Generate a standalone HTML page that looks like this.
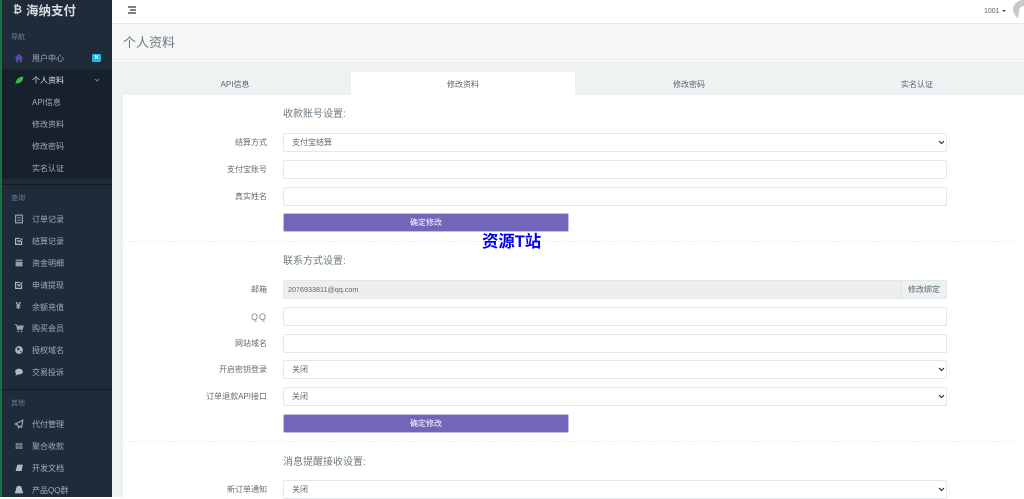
<!DOCTYPE html>
<html lang="zh"><head><meta charset="utf-8"><title>个人资料</title>
<style>
*{box-sizing:border-box}
html,body{margin:0;padding:0;width:1024px;height:497px;overflow:hidden;background:#fff;font-family:"Liberation Sans","Noto Sans CJK SC",sans-serif;color:#58666e}
.a{position:absolute}
#side{left:0;top:0;width:112px;height:497px;background:#1f2b38;border-left:2px solid #14743a;overflow:hidden}
.sec{position:absolute;left:9px;font-size:7px;color:#6d8093;line-height:10px}
.it{position:absolute;left:30px;font-size:8px;color:#a0aebb;line-height:12px;white-space:nowrap}
.ic{position:absolute;left:10px;width:14px;height:14px;transform:scale(.85)}
.ln{position:absolute;left:0;width:110px;height:1px;background:#121a22}
.lab{position:absolute;width:100px;left:167px;text-align:right;font-size:8px;color:#5f6c74;line-height:12px;white-space:nowrap}
.f{position:absolute;left:283px;width:664px;height:19px;background:#fff;border:1px solid #e3e8ea;border-radius:2px;font-size:8px;line-height:18px;padding-left:8px;color:#58666e}
.f svg{position:absolute;right:1px;top:6px}
.h{position:absolute;left:283px;font-size:10px;line-height:14px;color:#6d7a82;white-space:nowrap}
.btn{position:absolute;left:283px;width:286px;height:19px;background:#7266ba;border:1px solid #c4bee4;border-radius:2px;color:#fff;font-size:8px;line-height:18px;text-align:center}
.dash{position:absolute;left:123px;width:892px;border-top:1px dashed #eef0f1}
.tab{position:absolute;top:73px;height:23px;font-size:8px;line-height:23px;text-align:center;color:#58666e}
</style></head><body>
<div class="a" style="left:112px;top:0;width:912px;height:24px;background:#fff;border-bottom:1px solid #e6e9ea"></div>
<svg class="a" style="left:128px;top:6px" width="9" height="8" viewBox="0 0 9 8"><path d="M0 1h8M2 4h6M0 7h8" stroke="#333" stroke-width="1.3" fill="none"/></svg>
<div class="a" style="left:984px;top:6px;font-size:7px;line-height:11px;color:#58666e">1001</div>
<div class="a" style="left:1002px;top:10px;width:0;height:0;border:2px solid transparent;border-top:2.5px solid #444"></div>
<svg class="a" style="left:1011px;top:0" width="13" height="19" viewBox="0 0 13 19"><path d="M13 0C6 0 2 5 2 9s2 7 5 9L8 12c0-4 2-6 5-6z" fill="#c9c9c9"/></svg>

<div class="a" style="left:112px;top:24px;width:912px;height:36px;background:#f5f7f7;border-bottom:1px solid #e3e8ea"></div>
<div class="a" style="left:123px;top:33px;font-size:13px;line-height:20px;color:#6f7a80">个人资料</div>
<div class="a" style="left:112px;top:61px;width:912px;height:436px;background:#eef2f3"></div>
<div class="a" style="left:123px;top:95px;width:901px;height:402px;background:#fff"></div>
<div class="a" style="left:351px;top:72px;width:224px;height:24px;background:#fff"></div>
<div class="tab" style="left:122px;width:226px">API信息</div>
<div class="tab" style="left:351px;width:224px">修改资料</div>
<div class="tab" style="left:576px;width:226px">修改密码</div>
<div class="tab" style="left:804px;width:226px">实名认证</div>

<div class="h" style="top:108px">收款账号设置:</div>
<div class="lab" style="top:137px">结算方式</div>
<div class="f" style="top:133px">支付宝结算<svg width="7" height="5" viewBox="0 0 7 5"><path d="M1 1l2.500 2.500L6 1" stroke="#333" stroke-width="1.2" fill="none"/></svg></div>
<div class="lab" style="top:164px">支付宝账号</div>
<div class="f" style="top:160px"></div>
<div class="lab" style="top:191px">真实姓名</div>
<div class="f" style="top:187px"></div>
<div class="btn" style="top:213px">确定修改</div>
<div class="dash" style="top:241px"></div>
<div class="a" style="left:482px;top:233px;font-size:16.4px;font-weight:bold;line-height:18px;color:#0000f0;white-space:nowrap">资源T站</div>

<div class="h" style="top:255px">联系方式设置:</div>
<div class="lab" style="top:284px">邮箱</div>
<div class="f" style="top:280px;background:#eeeeee;color:#666;font-size:7.2px;padding-left:4px">2076933811@qq.com</div>
<div class="a" style="left:901px;top:280px;width:46px;height:19px;background:#edf1f2;border:1px solid #e3e8ea;border-radius:0 2px 2px 0;font-size:8px;line-height:18px;text-align:center;color:#58666e">修改绑定</div>
<div class="lab" style="top:311px;font-size:9px;letter-spacing:1px;color:#7b868d">QQ</div>
<div class="f" style="top:307px"></div>
<div class="lab" style="top:338px">网站域名</div>
<div class="f" style="top:334px"></div>
<div class="lab" style="top:364px">开启密钥登录</div>
<div class="f" style="top:360px">关闭<svg width="7" height="5" viewBox="0 0 7 5"><path d="M1 1l2.500 2.500L6 1" stroke="#333" stroke-width="1.2" fill="none"/></svg></div>
<div class="lab" style="top:391px">订单退款API接口</div>
<div class="f" style="top:387px">关闭<svg width="7" height="5" viewBox="0 0 7 5"><path d="M1 1l2.500 2.500L6 1" stroke="#333" stroke-width="1.2" fill="none"/></svg></div>
<div class="btn" style="top:414px">确定修改</div>
<div class="dash" style="top:441px"></div>
<div class="h" style="top:456px">消息提醒接收设置:</div>
<div class="lab" style="top:484px">新订单通知</div>
<div class="f" style="top:480px">关闭<svg width="7" height="5" viewBox="0 0 7 5"><path d="M1 1l2.500 2.500L6 1" stroke="#333" stroke-width="1.2" fill="none"/></svg></div>

<div id="side" class="a">
<div class="a" style="left:11px;top:3px;font-size:11px;font-weight:bold;line-height:15px;color:#d8dde2">₿</div>
<div class="a" style="left:24px;top:2.5px;font-size:12.5px;font-weight:bold;line-height:16px;color:#d8dde2;white-space:nowrap">海纳支付</div>
<div class="sec" style="top:33px">导航</div>
<div class="a" style="left:0;top:69px;width:110px;height:110px;background:#17212b"></div>
<svg class="ic" style="top:51px" viewBox="0 0 14 14"><path d="M7 2L1.500 7.500H3.500V12H6V9h2v3h2.500V7.500h2z" fill="#5a4bb0"/></svg>
<div class="it" style="top:53px">用户中心</div>
<div class="a" style="left:90px;top:54px;width:9px;height:8px;background:#23b7e5;border-radius:1px;color:#fff;font-size:5.500px;line-height:8px;text-align:center;font-weight:bold">N</div>
<svg class="ic" style="top:73px" viewBox="0 0 14 14"><path d="M3 12c0-6 4-9 9-9-0 5-3 8-8 8z" fill="#27c24c"/></svg>
<div class="it" style="top:75px;color:#dfe4e8">个人资料</div>
<svg class="a" style="left:92px;top:78px" width="6" height="4" viewBox="0 0 6 4"><path d="M1 1l2 2 2-2" stroke="#6d8093" fill="none"/></svg>
<div class="it" style="top:97px">API信息</div>
<div class="it" style="top:119px">修改资料</div>
<div class="it" style="top:141px">修改密码</div>
<div class="it" style="top:163px">实名认证</div>
<div class="ln" style="top:184px"></div>
<div class="sec" style="top:194px">查询</div>
<svg class="ic" style="top:212px" viewBox="0 0 14 14"><rect x="3" y="2.500" width="8" height="9" fill="none" stroke="#8fa3b8" stroke-width="1.400"/><path d="M5 5h4M5 7h4M5 9h4" stroke="#8fa3b8" stroke-width=".7"/></svg>
<div class="it" style="top:214px">订单记录</div>
<svg class="ic" style="top:234px" viewBox="0 0 14 14"><path d="M10 7v4H3V4h5" fill="none" stroke="#a9bacb" stroke-width="1.400"/><path d="M5 6l2 2 4-4" fill="none" stroke="#a9bacb" stroke-width="1.400"/></svg>
<div class="it" style="top:236px">结算记录</div>
<svg class="ic" style="top:256px" viewBox="0 0 14 14"><path d="M3 3h8v1.500H3zM3 5.500h8V11H3z" fill="#8fa3b8"/></svg>
<div class="it" style="top:258px">资金明细</div>
<svg class="ic" style="top:278px" viewBox="0 0 14 14"><path d="M10 7v4H3V4h5" fill="none" stroke="#a9bacb" stroke-width="1.400"/><path d="M5 6l2 2 4-4" fill="none" stroke="#a9bacb" stroke-width="1.400"/></svg>
<div class="it" style="top:280px">申请提现</div>
<div class="a" style="left:13.500px;top:300px;font-size:10px;line-height:14px;font-weight:bold;color:#a9bacb">¥</div>
<div class="it" style="top:302px">余额充值</div>
<svg class="ic" style="top:321px" viewBox="0 0 14 14"><path d="M2 3h2l1 5.500h6L12 4.500H4.500" fill="#8fa3b8" stroke="#8fa3b8"/><circle cx="6" cy="11" r="1" fill="#8fa3b8"/><circle cx="10" cy="11" r="1" fill="#8fa3b8"/></svg>
<div class="it" style="top:323px">购买会员</div>
<svg class="ic" style="top:343px" viewBox="0 0 14 14"><circle cx="7" cy="7" r="4.500" fill="#a9bacb"/><path d="M5 4l3 1-1 2-2 1zM8 8l2 0-1 2z" fill="#1f2b38"/></svg>
<div class="it" style="top:345px">授权域名</div>
<svg class="ic" style="top:365px" viewBox="0 0 14 14"><ellipse cx="7" cy="6.500" rx="4.500" ry="3.500" fill="#a9bacb"/><path d="M3.500 8.500L3 11.500l3-2z" fill="#a9bacb"/></svg>
<div class="it" style="top:367px">交易投诉</div>
<div class="ln" style="top:389px"></div>
<div class="sec" style="top:399px">其他</div>
<svg class="ic" style="top:417px" viewBox="0 0 14 14"><path d="M11.500 2.500L2.500 7l3 1.500 1 3 1.500-2 2 1.500z" fill="none" stroke="#a9bacb" stroke-width="1.200"/></svg>
<div class="it" style="top:419px">代付管理</div>
<svg class="ic" style="top:439px" viewBox="0 0 14 14"><path d="M3 3.500h8v7H3z" fill="#6f8398"/><path d="M3 7h8M7 3.500v7" stroke="#1f2b38" stroke-width=".6"/></svg>
<div class="it" style="top:441px">聚合收款</div>
<svg class="ic" style="top:461px" viewBox="0 0 14 14"><path d="M5 3h6.500L10 10.500H3z" fill="#a9bacb"/></svg>
<div class="it" style="top:463px">开发文档</div>
<svg class="ic" style="top:483px" viewBox="0 0 14 14"><path d="M7 2c2.500 0 3.500 2 3.500 4 0 1.500 1.500 3.500 1.500 5H2c0-1.500 1.500-3.500 1.500-5C3.500 4 4.500 2 7 2z" fill="#a9bacb"/></svg>
<div class="it" style="top:485px">产品QQ群</div>
</div>
</body></html>
